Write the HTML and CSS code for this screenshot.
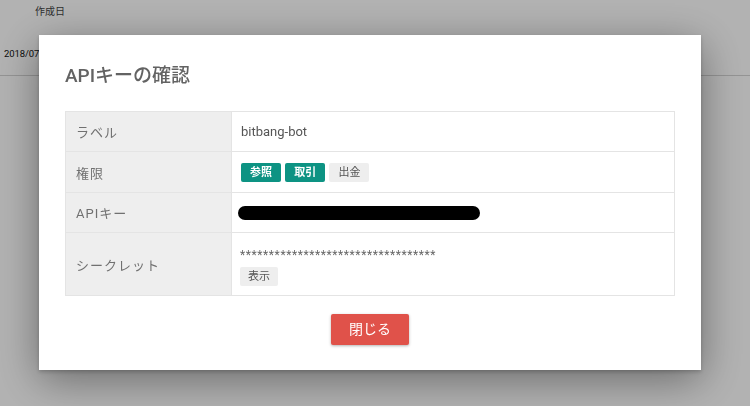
FILE: index.html
```html
<!DOCTYPE html>
<html lang="ja">
    <head>
        <meta charset="utf-8">
        <title>APIキーの確認</title>
        <link rel="stylesheet" href="styles.css">
    </head>
    <body>
    <div class="page">
        <div class="listHead"><span class="headCell">作成日</span></div>
        <div class="listRow"><span class="rowCell">2018/07/12</span></div>
    </div>
    <div class="overlay">
        <div class="modal">
            <h2 class="modalTitle">APIキーの確認</h2>
            <table class="keyTable">
                <tr class="rowLabel">
                    <th>ラベル</th>
                    <td>bitbang-bot</td>
                </tr>
                <tr class="rowPerm">
                    <th>権限</th>
                    <td>
                        <span class="tag on">参照</span>
                        <span class="tag on">取引</span>
                        <span class="tag">出金</span>
                    </td>
                </tr>
                <tr class="rowKey">
                    <th>APIキー</th>
                    <td><div class="mask"></div></td>
                </tr>
                <tr class="rowSecret">
                    <th>シークレット</th>
                    <td>
                        <div class="stars">**********************************</div>
                        <span class="showBtn">表示</span>
                    </td>
                </tr>
            </table>
            <div class="footer">
                <span class="closeBtn">閉じる</span>
            </div>
        </div>
    </div>
    </body>
</html>
```

FILE: styles.css
```css
body{
    margin:0;
    background-color:#fff;
    font-family:Roboto,"Noto Sans CJK JP",sans-serif;
    color:#333;
}
.page{height:406px;}
.listHead{height:24px;font-size:10px;}
.headCell{display:inline-block;margin-left:35px;line-height:24px;color:#444;}
.listRow{height:51px;border-bottom:1px solid #d4d4d4;font-size:9.5px;}
.rowCell{display:inline-block;margin-left:4px;line-height:60px;color:#111;letter-spacing:-0.1px;}

.overlay{
    position:fixed;
    left:0;top:0;right:0;bottom:0;
    background-color:rgba(0,0,0,0.3);
}
.modal{
    margin:35px 0 0 39px;
    width:662px;
    height:335px;
    box-sizing:border-box;
    background-color:#fff;
    padding:29px 26px 0 26px;
    box-shadow:0 10px 40px rgba(0,0,0,0.4),0 2px 4px rgba(0,0,0,0.2);
}
.modalTitle{
    margin:0 0 23px 0;
    font-size:19px;
    font-weight:500;
    line-height:24px;
    color:#636363;
}
.keyTable{
    width:610px;
    border-collapse:collapse;
    font-size:13px;
}
.keyTable th,.keyTable td{
    border:1px solid #e4e4e4;
    text-align:left;
    vertical-align:middle;
}
.keyTable th{
    width:145px;
    background-color:#eee;
    color:#707070;
    font-weight:400;
    letter-spacing:1px;
    padding:0 10px;
}
.keyTable td{color:#555;padding:0 8px 0 9px;}
.rowLabel{height:40px;}
.rowPerm{height:41px;}
.rowKey{height:40px;}
.rowSecret{height:63px;}

.tag{
    display:inline-block;
    height:19px;
    line-height:19px;
    padding:0 9px;
    margin-right:1px;
    border-radius:2px;
    background-color:#eee;
    color:#555;
    font-size:11px;
}
.tag.on{background-color:#0d9383;color:#fff;font-weight:700;width:22px;}
.mask{
    width:242px;
    height:14px;
    margin-left:-3px;
    border-radius:7px;
    background-color:#000;
}
.stars{font-size:12px;line-height:14px;color:#666;margin:5px 0 5px -1px;letter-spacing:0.6px;}
.showBtn{
    display:inline-block;
    height:19px;
    line-height:19px;
    padding:0 8px;
    margin-left:-1px;
    border-radius:2px;
    background-color:#eee;
    color:#555;
    font-size:11px;
}
.footer{text-align:center;padding-top:18px;}
.closeBtn{
    display:inline-block;
    width:78px;
    height:31px;
    line-height:31px;
    border-radius:2px;
    background-color:#e0524a;
    color:#fff;
    font-size:14px;
    box-shadow:0 1px 3px rgba(0,0,0,0.3);
}
```
